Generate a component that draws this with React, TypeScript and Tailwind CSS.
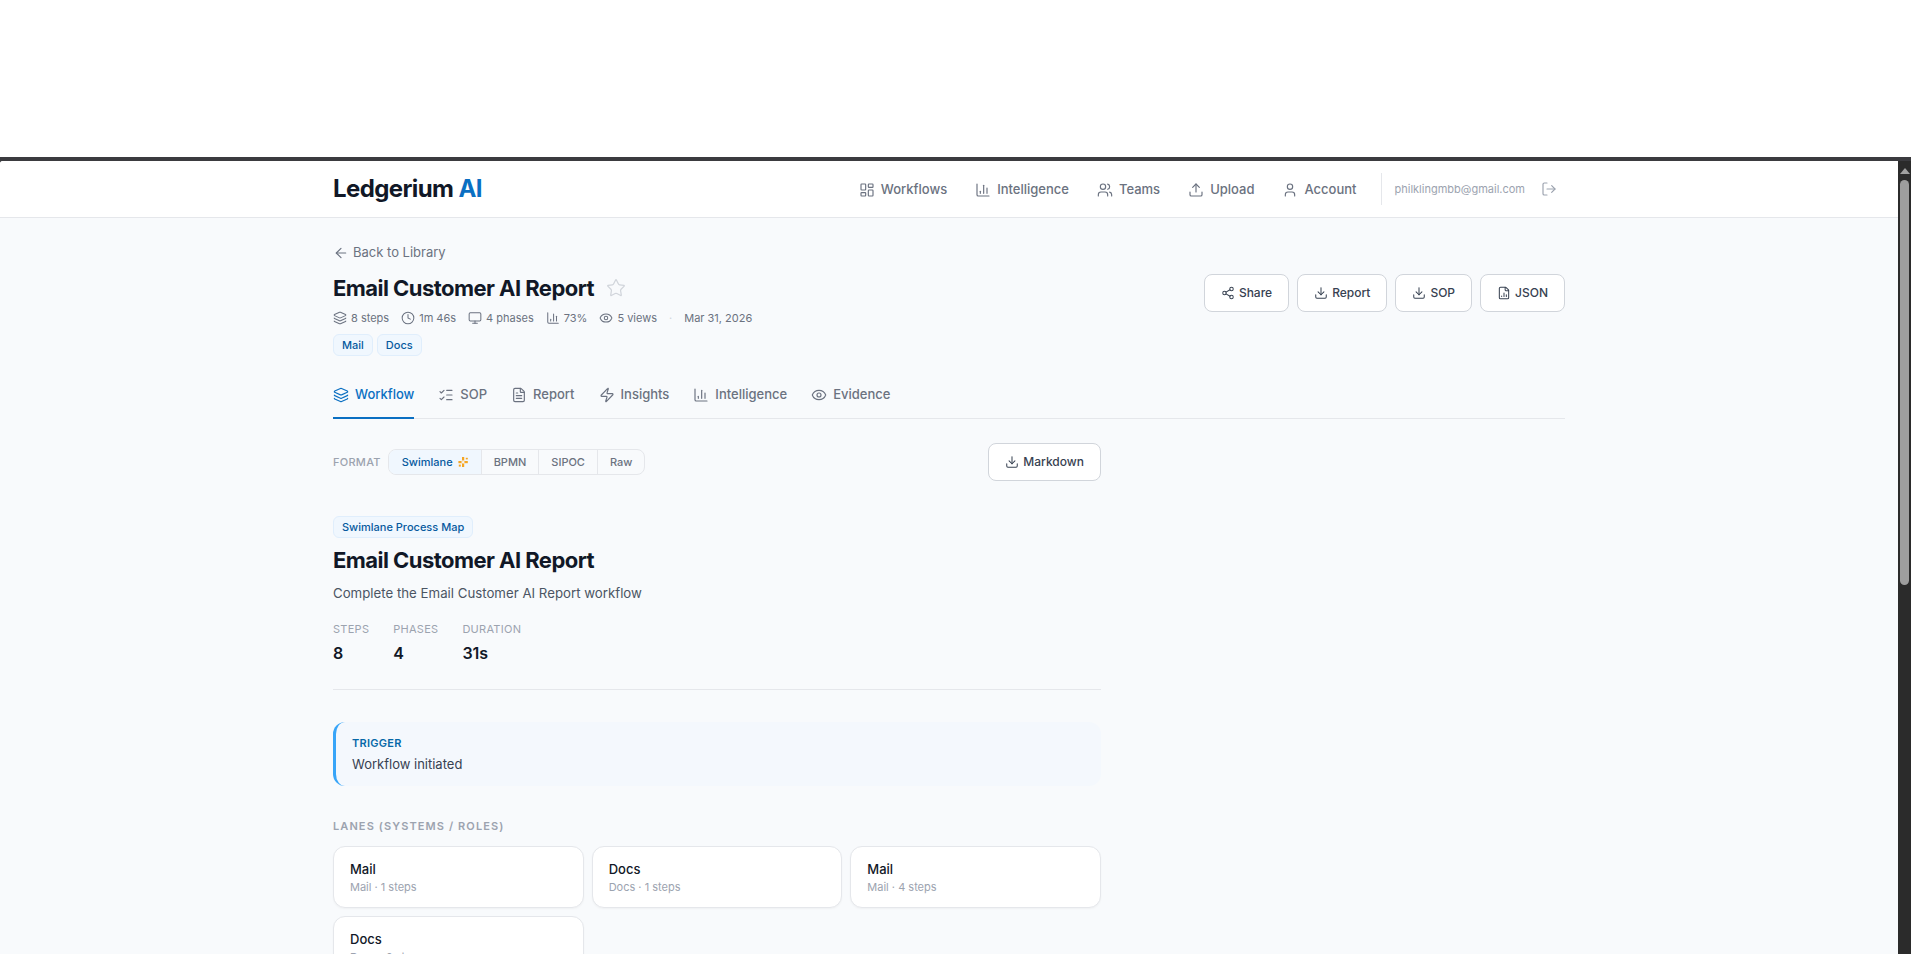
import { ArrowLeft, ChartColumn, Clock, Download, Eye, FileChartColumn, FileText, LayoutDashboard, Layers, ListChecks, LogOut, Monitor, Share2, Star, Upload, User, Users, Zap } from "lucide-react";

const nav: [any, string][] = [[LayoutDashboard, "Workflows"], [ChartColumn, "Intelligence"], [Users, "Teams"], [Upload, "Upload"], [User, "Account"]];
const meta: [any, string][] = [[Layers, "8 steps"], [Clock, "1m 46s"], [Monitor, "4 phases"], [ChartColumn, "73%"], [Eye, "5 views"]];
const tabs: [any, string][] = [[Layers, "Workflow"], [ListChecks, "SOP"], [FileText, "Report"], [Zap, "Insights"], [ChartColumn, "Intelligence"], [Eye, "Evidence"]];
const actions: [any, string][] = [[Share2, "Share"], [Download, "Report"], [Download, "SOP"], [FileChartColumn, "JSON"]];
const lanes = [["Mail", "Mail · 1 steps"], ["Docs", "Docs · 1 steps"], ["Mail", "Mail · 4 steps"], ["Docs", "Docs · 2 steps"]];

function Spark() {
  return (
    <svg width="12" height="12" viewBox="0 0 12 12" fill="none" className="shrink-0">
      <rect x="5" y="1" width="2.2" height="3" fill="#f5a623" />
      <rect x="5" y="8" width="2.2" height="3" fill="#f5a623" />
      <rect x="1.4" y="5" width="3" height="2.2" fill="#f5a623" />
      <rect x="7.8" y="5" width="3" height="2.2" fill="#f5a623" />
      <circle cx="6.1" cy="6.1" r="1.6" stroke="#f7c16b" strokeWidth="0.9" />
      <rect x="8.8" y="1.8" width="2" height="1.6" fill="#f5a623" />
      <rect x="1.8" y="8.6" width="2" height="2" fill="#f5a623" />
    </svg>
  );
}

export default function App() {
  return (
    <div className="h-[954px] overflow-hidden bg-white flex flex-col font-['Inter',sans-serif]">
      <div className="h-[157px] shrink-0 bg-white" />
      <div className="h-[4px] shrink-0 bg-[#3b3b3f]" />
      <div className="flex flex-1 min-h-0 bg-[#3b3b3f]">
        <div className="flex-1 min-w-0 bg-[#f8fafc] overflow-hidden rounded-tl-[3px]">
          <header className="h-[57px] bg-white border-b border-[#e5e7eb]">
            <div className="mx-auto max-w-[1280px] h-full px-6 flex items-center justify-between">
              <div className="text-[24px] font-bold tracking-tight text-[#111827]">Ledgerium <span className="text-[#0a6fc2]">AI</span></div>
              <div className="flex items-center">
                <nav className="flex items-center gap-[28px] pt-px">
                  {nav.map(([I, t]) => (
                    <div key={t} className="flex items-center gap-1.5 text-[13px] font-medium text-[#6b7280]"><I size={16} strokeWidth={1.75} />{t}</div>
                  ))}
                </nav>
                <div className="ml-6 pl-[13px] pr-2 h-8 border-l border-[#e5e7eb] flex items-center gap-4">
                  <span className="text-[11px] text-[#9ca3af]">philklingmbb@gmail.com</span>
                  <LogOut size={16} strokeWidth={1.75} className="text-[#9ca3af]" />
                </div>
              </div>
            </div>
          </header>
          <main className="mx-auto max-w-[1280px] px-6 pt-[25px]">
            <div className="flex items-center gap-1 text-[13px] text-[#6b7280] h-[20px]"><ArrowLeft size={16} strokeWidth={1.75} />Back to Library</div>
            <div className="flex justify-between mt-[9px]">
              <div>
                <div className="flex items-center gap-3 h-[32px]">
                  <h1 className="text-[22px] font-bold tracking-tight text-[#111827]">Email Customer AI Report</h1>
                  <Star size={20} strokeWidth={1.5} className="text-[#d1d5db]" />
                </div>
                <div className="flex items-center gap-3 mt-[5px] text-[11px] text-[#6b7280] h-[18px]">
                  {meta.map(([I, t]) => <span key={t} className="flex items-center gap-1"><I size={14} strokeWidth={1.75} />{t}</span>)}
                  <span className="text-[#d1d5db]">·</span>
                  <span>Mar 31, 2026</span>
                </div>
                <div className="flex gap-1 mt-[7px]">
                  {["Mail", "Docs"].map(t => <span key={t} className="h-[22px] px-2 flex items-center text-[11px] font-medium rounded-md bg-[#f0f7fe] border border-[#e0eefc] text-[#075a9e]">{t}</span>)}
                </div>
              </div>
              <div className="flex gap-2 mt-[2px]">
                {actions.map(([I, t]) => (
                  <div key={t} className="h-[38px] px-4 flex items-center gap-1 rounded-lg border border-[#d1d5db] bg-white text-xs font-medium text-[#374151]"><I size={14} strokeWidth={1.75} />{t}</div>
                ))}
              </div>
            </div>
            <div className="flex gap-6 mt-[18px] border-b border-[#e5e7eb] h-[45px]">
              {tabs.map(([I, t], i) => (
                <div key={t} className={"flex items-center gap-1.5 text-[13px] font-medium h-[45px] pb-[2px] border-b-2 " + (i === 0 ? "text-[#0a6fc2] border-[#0a6fc2]" : "text-[#6b7280] border-transparent")}><I size={16} strokeWidth={1.75} />{t}</div>
              ))}
            </div>
            <div className="w-[768px]">
              <div className="flex items-center justify-between mt-6">
                <div className="flex items-center gap-[7px]">
                  <span className="text-[11px] tracking-wide text-[#9ca3af] font-medium">FORMAT</span>
                  <div className="flex h-[26px] rounded-lg border border-[#e5e7eb] overflow-hidden text-[11px] font-medium text-[#6b7280]">
                    <span className="pl-[13px] pr-3 flex items-center gap-1 bg-[#f0f7fe] text-[#075a9e] border-r border-[#e5e7eb]">Swimlane <Spark /></span>
                    <span className="px-3 flex items-center border-r border-[#e5e7eb]">BPMN</span>
                    <span className="px-3 flex items-center border-r border-[#e5e7eb]">SIPOC</span>
                    <span className="px-3 flex items-center">Raw</span>
                  </div>
                </div>
                <div className="h-[38px] px-4 flex items-center gap-1 rounded-lg border border-[#d1d5db] bg-white text-xs font-medium text-[#374151]"><Download size={14} strokeWidth={1.75} />Markdown</div>
              </div>
              <div className="mt-[35px] inline-flex h-[22px] px-2 items-center text-[11px] font-medium rounded-md bg-[#f0f7fe] border border-[#e0eefc] text-[#075a9e]">Swimlane Process Map</div>
              <h2 className="text-[22px] font-bold tracking-tight text-[#111827] mt-[6px]">Email Customer AI Report</h2>
              <p className="text-[13.25px] text-[#4b5563] mt-[7px]">Complete the Email Customer AI Report workflow</p>
              <div className="flex gap-6 mt-[17px]">
                {[["STEPS", "8"], ["PHASES", "4"], ["DURATION", "31s"]].map(([a, b]) => (
                  <div key={a}><div className="text-[11px] tracking-wide text-[#9ca3af]">{a}</div><div className="text-base font-semibold text-[#111827] mt-[4px]">{b}</div></div>
                ))}
              </div>
              <div className="border-t border-[#e5e7eb] mt-[24px]" />
              <div className="mt-[32px] h-[64px] rounded-xl border-l-[3px] border-[#38a5f8] bg-[#f4f8fd] px-[16px] pt-[13px]">
                <div className="text-[11px] font-semibold tracking-wide text-[#0668a8]">TRIGGER</div>
                <div className="text-[13px] text-[#374151] mt-[3px]">Workflow initiated</div>
              </div>
              <div className="mt-[32px] text-[11px] font-semibold tracking-widest text-[#9ca3af]">LANES (SYSTEMS / ROLES)</div>
              <div className="grid grid-cols-3 gap-2 mt-[11px]">
                {lanes.map(([a, b], i) => (
                  <div key={i} className="h-[62px] rounded-xl border border-[#e5e7eb] bg-white shadow-[0_1px_2px_rgba(0,0,0,0.04)] px-4 py-[13px]">
                    <div className="text-[13px] font-medium text-[#111827]">{a}</div>
                    <div className="text-[11px] text-[#9ca3af]">{b}</div>
                  </div>
                ))}
              </div>
            </div>
          </main>
        </div>
        <div className="w-[13px] shrink-0 bg-[#2b2b2b]">
          <div className="mx-auto mt-[7px] w-0 h-0 border-l-[5px] border-r-[5px] border-b-[6px] border-l-transparent border-r-transparent border-b-[#a0a0a0]" />
          <div className="mx-auto mt-[6px] w-[9px] h-[405px] rounded-full bg-[#9e9e9e]" />
        </div>
      </div>
    </div>
  );
}
